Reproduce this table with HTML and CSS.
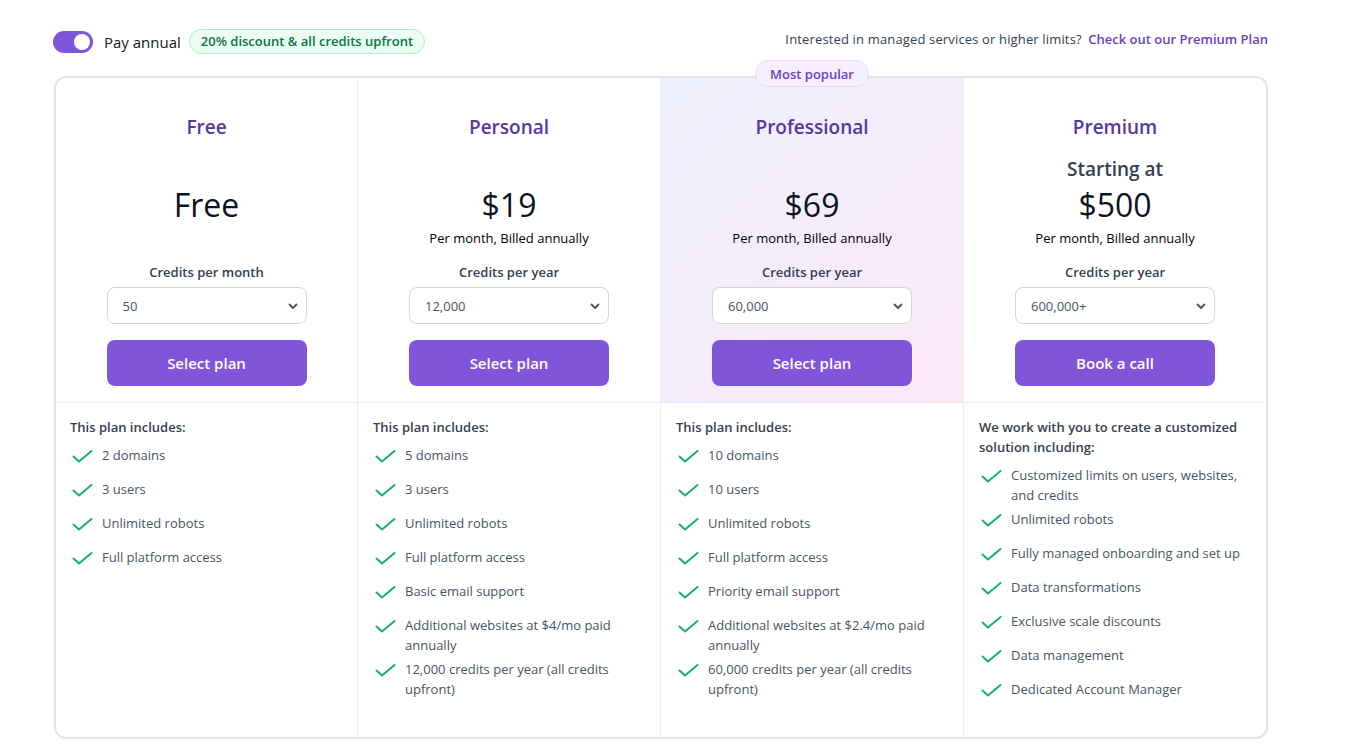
FILE: index.html
```html
<!DOCTYPE html>
<html lang="en">
<head>
<meta charset="utf-8">
<title>Pricing</title>
<link rel="stylesheet" href="styles.css">
</head>
<body>
<div class="page">
  <div class="topbar">
    <div class="billing">
      <span class="toggle"><span class="knob"></span></span>
      <span class="pay">Pay annual</span>
      <span class="discount">20% discount &amp; all credits upfront</span>
    </div>
    <div class="premium-note">Interested in managed services or higher limits? <a class="premium-link" href="#">Check out our Premium Plan</a></div>
  </div>

  <div class="plans">
    <span class="popular">Most popular</span>

    <div class="head">
      <div class="plan-name">Free</div>
      <div class="starting hidden">Starting at</div>
      <div class="price">Free</div>
      <div class="billed"></div>
      <div class="credits-label">Credits per month</div>
      <div class="select"><span>50</span><svg class="chev" viewBox="0 0 12 12" width="12" height="12"><path d="M2.5 4.5 L6 8 L9.5 4.5" fill="none" stroke="#475467" stroke-width="1.8" stroke-linecap="round" stroke-linejoin="round"/></svg></div>
      <button class="btn">Select plan</button>
    </div>
    <div class="head">
      <div class="plan-name">Personal</div>
      <div class="starting hidden">Starting at</div>
      <div class="price">$19</div>
      <div class="billed">Per month, Billed annually</div>
      <div class="credits-label">Credits per year</div>
      <div class="select"><span>12,000</span><svg class="chev" viewBox="0 0 12 12" width="12" height="12"><path d="M2.5 4.5 L6 8 L9.5 4.5" fill="none" stroke="#475467" stroke-width="1.8" stroke-linecap="round" stroke-linejoin="round"/></svg></div>
      <button class="btn">Select plan</button>
    </div>
    <div class="head featured">
      <div class="plan-name">Professional</div>
      <div class="starting hidden">Starting at</div>
      <div class="price">$69</div>
      <div class="billed">Per month, Billed annually</div>
      <div class="credits-label">Credits per year</div>
      <div class="select"><span>60,000</span><svg class="chev" viewBox="0 0 12 12" width="12" height="12"><path d="M2.5 4.5 L6 8 L9.5 4.5" fill="none" stroke="#475467" stroke-width="1.8" stroke-linecap="round" stroke-linejoin="round"/></svg></div>
      <button class="btn">Select plan</button>
    </div>
    <div class="head">
      <div class="plan-name">Premium</div>
      <div class="starting">Starting at</div>
      <div class="price">$500</div>
      <div class="billed">Per month, Billed annually</div>
      <div class="credits-label">Credits per year</div>
      <div class="select"><span>600,000+</span><svg class="chev" viewBox="0 0 12 12" width="12" height="12"><path d="M2.5 4.5 L6 8 L9.5 4.5" fill="none" stroke="#475467" stroke-width="1.8" stroke-linecap="round" stroke-linejoin="round"/></svg></div>
      <button class="btn">Book a call</button>
    </div>

    <div class="features">
      <div class="feat-title">This plan includes:</div>
      <ul class="list">
        <li><svg class="check" viewBox="0 0 24 24"><path d="M3.5 11.5 L9 16.5 L21.5 6"/></svg><span>2 domains</span></li>
        <li><svg class="check" viewBox="0 0 24 24"><path d="M3.5 11.5 L9 16.5 L21.5 6"/></svg><span>3 users</span></li>
        <li><svg class="check" viewBox="0 0 24 24"><path d="M3.5 11.5 L9 16.5 L21.5 6"/></svg><span>Unlimited robots</span></li>
        <li><svg class="check" viewBox="0 0 24 24"><path d="M3.5 11.5 L9 16.5 L21.5 6"/></svg><span>Full platform access</span></li>
      </ul>
    </div>
    <div class="features">
      <div class="feat-title">This plan includes:</div>
      <ul class="list">
        <li><svg class="check" viewBox="0 0 24 24"><path d="M3.5 11.5 L9 16.5 L21.5 6"/></svg><span>5 domains</span></li>
        <li><svg class="check" viewBox="0 0 24 24"><path d="M3.5 11.5 L9 16.5 L21.5 6"/></svg><span>3 users</span></li>
        <li><svg class="check" viewBox="0 0 24 24"><path d="M3.5 11.5 L9 16.5 L21.5 6"/></svg><span>Unlimited robots</span></li>
        <li><svg class="check" viewBox="0 0 24 24"><path d="M3.5 11.5 L9 16.5 L21.5 6"/></svg><span>Full platform access</span></li>
        <li><svg class="check" viewBox="0 0 24 24"><path d="M3.5 11.5 L9 16.5 L21.5 6"/></svg><span>Basic email support</span></li>
        <li><svg class="check" viewBox="0 0 24 24"><path d="M3.5 11.5 L9 16.5 L21.5 6"/></svg><span>Additional websites at $4/mo paid annually</span></li>
        <li><svg class="check" viewBox="0 0 24 24"><path d="M3.5 11.5 L9 16.5 L21.5 6"/></svg><span>12,000 credits per year (all credits upfront)</span></li>
      </ul>
    </div>
    <div class="features">
      <div class="feat-title">This plan includes:</div>
      <ul class="list">
        <li><svg class="check" viewBox="0 0 24 24"><path d="M3.5 11.5 L9 16.5 L21.5 6"/></svg><span>10 domains</span></li>
        <li><svg class="check" viewBox="0 0 24 24"><path d="M3.5 11.5 L9 16.5 L21.5 6"/></svg><span>10 users</span></li>
        <li><svg class="check" viewBox="0 0 24 24"><path d="M3.5 11.5 L9 16.5 L21.5 6"/></svg><span>Unlimited robots</span></li>
        <li><svg class="check" viewBox="0 0 24 24"><path d="M3.5 11.5 L9 16.5 L21.5 6"/></svg><span>Full platform access</span></li>
        <li><svg class="check" viewBox="0 0 24 24"><path d="M3.5 11.5 L9 16.5 L21.5 6"/></svg><span>Priority email support</span></li>
        <li><svg class="check" viewBox="0 0 24 24"><path d="M3.5 11.5 L9 16.5 L21.5 6"/></svg><span>Additional websites at $2.4/mo paid annually</span></li>
        <li><svg class="check" viewBox="0 0 24 24"><path d="M3.5 11.5 L9 16.5 L21.5 6"/></svg><span>60,000 credits per year (all credits upfront)</span></li>
      </ul>
    </div>
    <div class="features">
      <div class="feat-title">We work with you to create a customized solution including:</div>
      <ul class="list">
        <li><svg class="check" viewBox="0 0 24 24"><path d="M3.5 11.5 L9 16.5 L21.5 6"/></svg><span>Customized limits on users, websites, and credits</span></li>
        <li><svg class="check" viewBox="0 0 24 24"><path d="M3.5 11.5 L9 16.5 L21.5 6"/></svg><span>Unlimited robots</span></li>
        <li><svg class="check" viewBox="0 0 24 24"><path d="M3.5 11.5 L9 16.5 L21.5 6"/></svg><span>Fully managed onboarding and set up</span></li>
        <li><svg class="check" viewBox="0 0 24 24"><path d="M3.5 11.5 L9 16.5 L21.5 6"/></svg><span>Data transformations</span></li>
        <li><svg class="check" viewBox="0 0 24 24"><path d="M3.5 11.5 L9 16.5 L21.5 6"/></svg><span>Exclusive scale discounts</span></li>
        <li><svg class="check" viewBox="0 0 24 24"><path d="M3.5 11.5 L9 16.5 L21.5 6"/></svg><span>Data management</span></li>
        <li><svg class="check" viewBox="0 0 24 24"><path d="M3.5 11.5 L9 16.5 L21.5 6"/></svg><span>Dedicated Account Manager</span></li>
      </ul>
    </div>
  </div>
</div>
</body>
</html>
```

FILE: styles.css
```css
* { box-sizing: border-box; }
html, body { margin: 0; padding: 0; background: #fff; }
body {
  font-family: "Open Sans", "Noto Sans", sans-serif;
  color: #101828;
}
.page {
  width: 1214px;
  margin-left: 54px;
  padding-top: 28px;
}
.topbar {
  display: flex;
  justify-content: space-between;
  align-items: center;
  height: 27px;
}
.billing {
  display: flex;
  align-items: center;
  margin-left: -1px;
}
.toggle {
  width: 40px;
  height: 22px;
  border-radius: 11px;
  background: #7f56d9;
  display: flex;
  align-items: center;
  justify-content: flex-end;
  padding-right: 3px;
}
.knob {
  width: 16px;
  height: 16px;
  border-radius: 50%;
  background: #fff;
}
.pay {
  font-size: 15px;
  color: #101828;
  margin-left: 11px;
}
.discount {
  margin-left: 8px;
  font-size: 13px;
  font-weight: 600;
  color: #067647;
  background: #ecfdf3;
  border: 1px solid #abefc6;
  border-radius: 13px;
  padding: 0 11px;
  height: 25px;
  line-height: 23px;
}
.premium-note {
  font-size: 13px;
  color: #344054;
  margin-top: -5px;
  letter-spacing: 0.15px;
}
.premium-link {
  color: #6941c6;
  font-weight: 600;
  text-decoration: none;
  margin-left: 3px;
  letter-spacing: 0;
}
.plans {
  position: relative;
  margin-top: 21px;
  border: 2px solid #e4e4e7;
  border-radius: 12px;
  display: grid;
  grid-template-columns: 301px 303px 303px 303px;
}
.popular {
  position: absolute;
  top: -18px;
  left: 699px;
  width: 114px;
  height: 27px;
  border-radius: 14px;
  background: #f5efff;
  border: 1px solid #e9d7fe;
  color: #6941c6;
  font-size: 13px;
  font-weight: 600;
  display: flex;
  align-items: center;
  justify-content: center;
  z-index: 2;
}
.head {
  display: flex;
  flex-direction: column;
  align-items: center;
  padding: 36px 0 16px;
  border-bottom: 1px solid #eaecf0;
  border-left: 1px solid #eaecf0;
}
.head:first-of-type { border-left: none; border-top-left-radius: 10px; }
.head.featured {
  background: linear-gradient(135deg, #eef0fd 0%, #f5ecfb 50%, #fbe8f7 100%);
}
.plan-name {
  font-size: 19px;
  line-height: 26px;
  font-weight: 600;
  color: #53389e;
}
.starting {
  margin-top: 16px;
  font-size: 19px;
  line-height: 26px;
  color: #344054;
  font-weight: 600;
}
.hidden { visibility: hidden; }
.price {
  margin-top: 3px;
  font-size: 32px;
  line-height: 40px;
  font-weight: 500;
  color: #0c1322;
}
.billed {
  margin-top: 4px;
  font-size: 13px;
  line-height: 18px;
  min-height: 18px;
  color: #000;
}
.credits-label {
  margin-top: 16px;
  font-size: 13px;
  line-height: 18px;
  font-weight: 600;
  color: #344054;
}
.select {
  margin-top: 6px;
  width: 200px;
  height: 37px;
  border: 1px solid #d0d5dd;
  border-radius: 8px;
  background: #fff;
  display: flex;
  align-items: center;
  justify-content: space-between;
  padding: 0 7px 0 15px;
  font-size: 13px;
  color: #475467;
}
.btn {
  margin-top: 16px;
  width: 200px;
  height: 46px;
  border: none;
  border-radius: 8px;
  background: #7f56d9;
  color: #fff;
  font-family: inherit;
  font-size: 15px;
  font-weight: 600;
}
.features {
  padding: 14px 14px 28px 15px;
  border-left: 1px solid #eaecf0;
}
.features:nth-of-type(5) { border-left: none; padding-left: 14px; }
.feat-title {
  font-size: 13px;
  line-height: 20px;
  font-weight: 600;
  color: #344054;
}
.list {
  list-style: none;
  margin: 8px 0 0;
  padding: 0;
  display: flex;
  flex-direction: column;
  gap: 4px;
}
.list li {
  display: flex;
  align-items: flex-start;
  gap: 8px;
  min-height: 30px;
  font-size: 13px;
  line-height: 20px;
  color: #475467;
}
.check {
  flex: none;
  width: 24px;
  height: 24px;
  fill: none;
  stroke: #17b26a;
  stroke-width: 2;
  stroke-linecap: round;
  stroke-linejoin: round;
}
```
